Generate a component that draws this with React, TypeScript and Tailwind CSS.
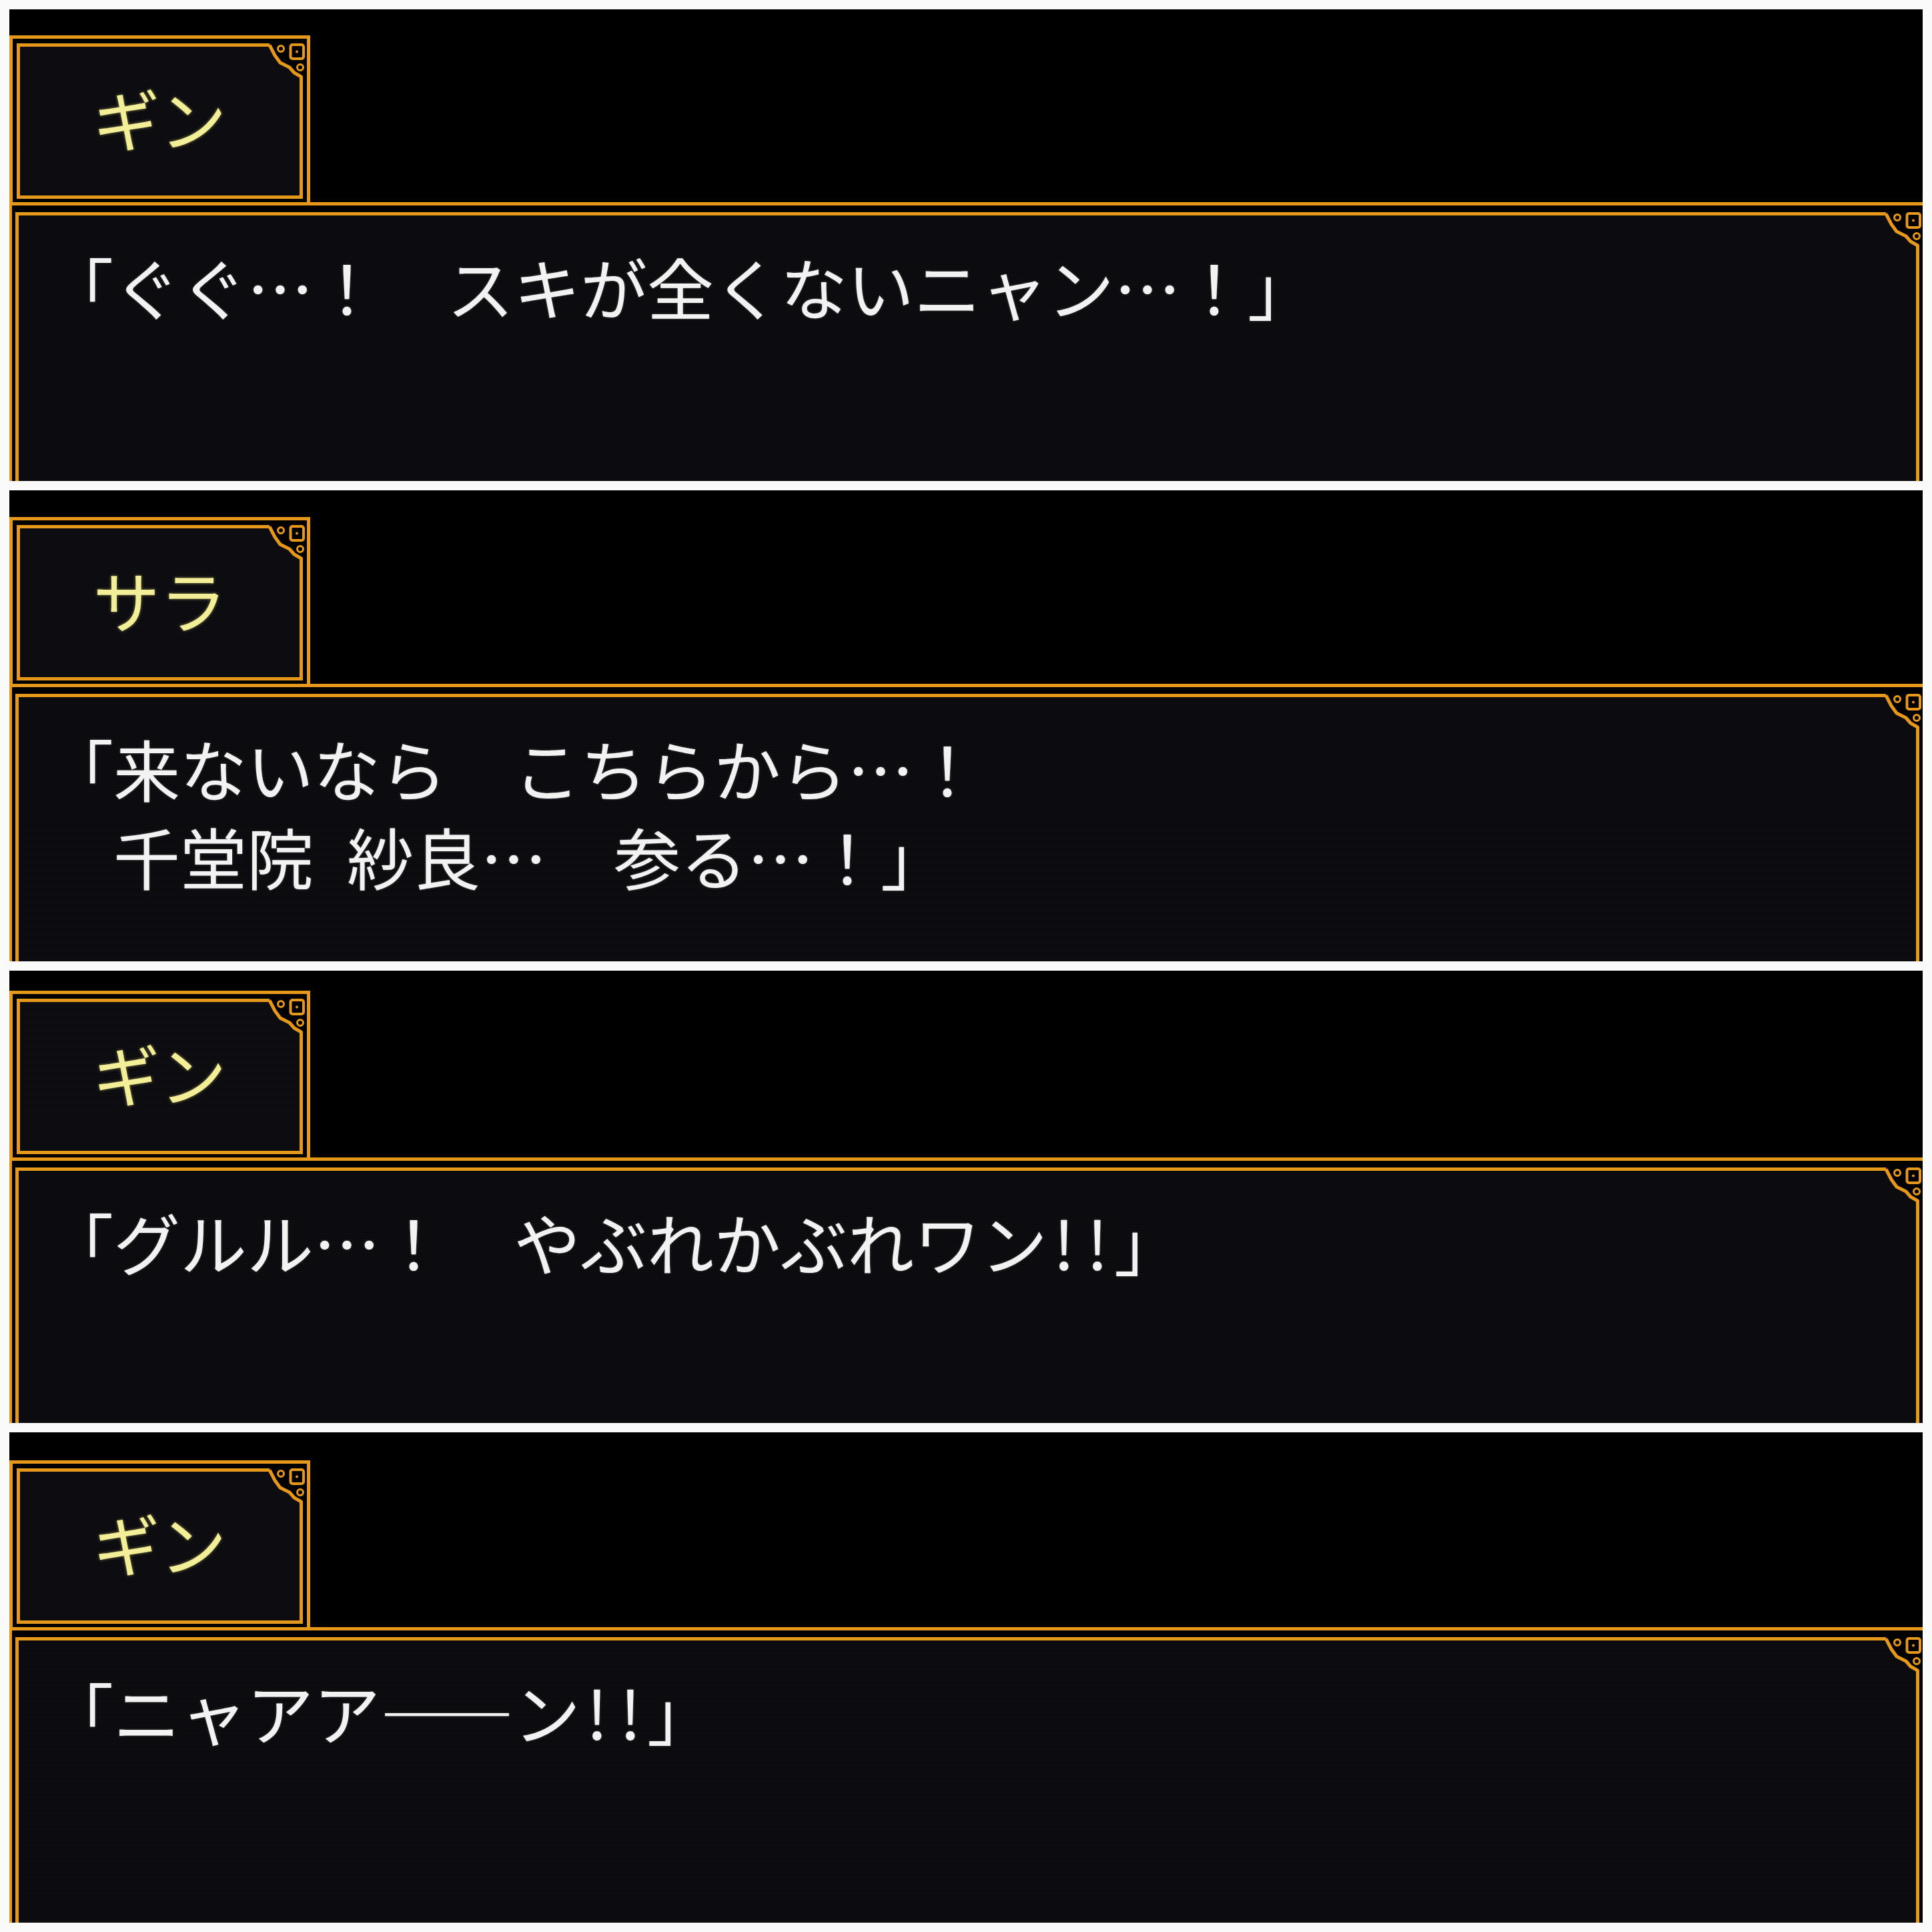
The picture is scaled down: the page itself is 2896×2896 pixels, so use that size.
import type { ReactNode } from 'react'

const ORANGE = '#e6981a'

// corner ornament on the top-right of each frame
function Ornament() {
  return (
    <svg
      className="absolute -top-[7px] -right-[10px] w-[60px] h-[60px] overflow-visible"
      viewBox="-55 -2 60 60"
    >
      <polygon
        points="-50,-2 5,-2 5,56 -2.5,56 -2.5,50 -13,44 -20,36 -28,32 -34,29 -42,18 -50,2.5"
        fill="#000"
      />
      <polyline
        points="-50,2.5 -42,18 -34,29 -28,32 -20,36 -13,44 -2.5,50 -2.5,58"
        fill="none"
        stroke={ORANGE}
        strokeWidth="5"
        strokeLinejoin="round"
      />
      <circle cx="-33" cy="8" r="4.5" fill="none" stroke={ORANGE} strokeWidth="3" />
      <rect x="-18.5" y="2" width="19.5" height="21" rx="3" fill="none" stroke={ORANGE} strokeWidth="4" />
      <circle cx="-9" cy="12.5" r="2" fill={ORANGE} />
      <circle cx="-4" cy="36" r="4.5" fill="none" stroke={ORANGE} strokeWidth="3" />
    </svg>
  )
}

const Bang = () => <span className="inline-block w-[0.5em] text-center">!</span>
const Half = () => <span className="inline-block w-[0.5em]" />

type Scene = { h: string; top: string; name: string; lines: ReactNode[] }

const scenes: Scene[] = [
  { h: 'h-[707px]', top: 'pt-[39px]', name: 'ギン', lines: ['「ぐぐ…！　スキが全くないニャン…！」'] },
  {
    h: 'h-[706px]',
    top: 'pt-[40px]',
    name: 'サラ',
    lines: [
      '「来ないなら　こちらから…！',
      <>
        {'\u3000千堂院'}
        <Half />
        {'紗良…\u3000参る…！」'}
      </>,
    ],
  },
  {
    h: 'h-[678px]',
    top: 'pt-[30px]',
    name: 'ギン',
    lines: [
      <>
        {'「グルル…！\u3000やぶれかぶれワン'}
        <Bang />
        <Bang />」
      </>,
    ],
  },
  {
    h: 'h-[735px]',
    top: 'pt-[42px]',
    name: 'ギン',
    lines: [
      <>
        「ニャアア――ン<Bang />
        <Bang />」
      </>,
    ],
  },
]

function Panel({ scene }: { scene: Scene }) {
  return (
    <div className={`flex flex-col bg-black overflow-hidden ${scene.h} ${scene.top}`}>
      {/* name plate */}
      <div className="w-[451px] h-[250px] shrink-0 border-t-[5px] border-x-[5px] border-[#e6981a] px-[6px] pt-[7px] pb-[5px]">
        <div className="relative h-full border-[5px] border-[#e6981a] bg-[repeating-linear-gradient(0deg,#0c0c10_0px,#0c0c10_2px,#0e0e12_2px,#0e0e12_4px)] flex items-center justify-center pb-[12px]">
          <span className="text-[100px] leading-none text-[#f3ee98] [text-shadow:0_0_4px_rgba(240,230,120,0.55)]">
            {scene.name}
          </span>
          <Ornament />
        </div>
      </div>

      {/* message window */}
      <div className="flex-1 min-h-0 border-t-[5px] border-l-[4px] border-[#e6981a] pt-[10px] pl-[5px] pr-[5px]">
        <div className="relative h-full border-t-[5px] border-x-[5px] border-[#e6981a] bg-[repeating-linear-gradient(0deg,#0b0b0e_0px,#0b0b0e_2px,#0d0d11_2px,#0d0d11_4px)] pl-[42px] pt-[40px]">
          {scene.lines.map((line, i) => (
            <div
              key={i}
              className="text-[100px] leading-[132px] text-[#f2f2f2] whitespace-pre [text-shadow:0_0_3px_rgba(255,255,255,0.35)]"
            >
              {line}
            </div>
          ))}
          <Ornament />
        </div>
      </div>
    </div>
  )
}

export default function App() {
  return (
    <div className="w-[2896px] h-[2896px] bg-[#fafafa] p-[14px] flex flex-col gap-[14px] font-['Noto_Sans_CJK_JP','Noto_Sans',sans-serif]">
      {scenes.map((s, i) => (
        <Panel key={i} scene={s} />
      ))}
    </div>
  )
}
